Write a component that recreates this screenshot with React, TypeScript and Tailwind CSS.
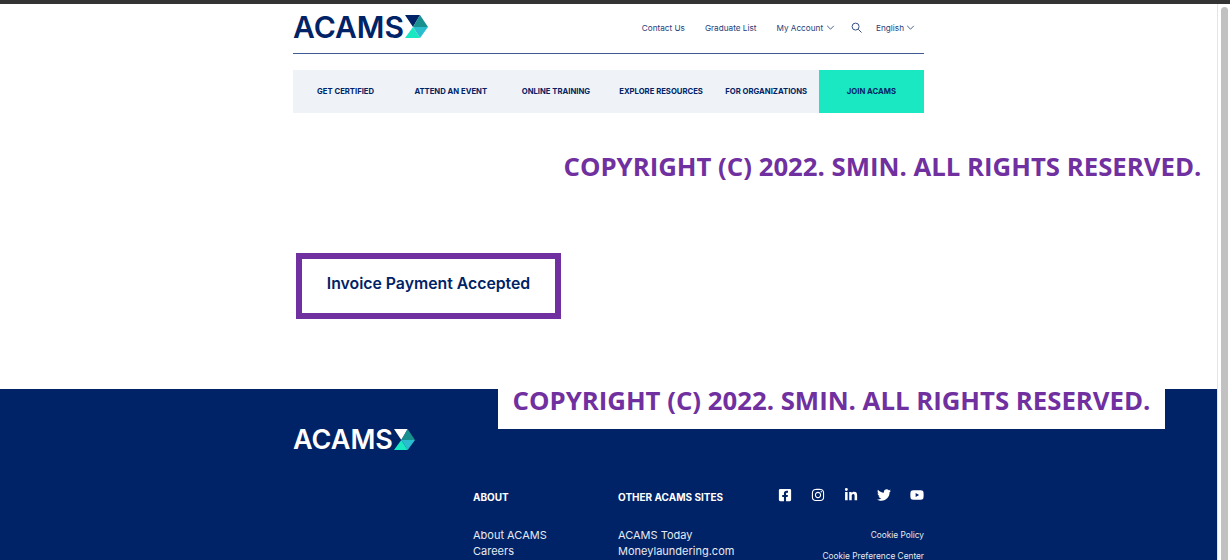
import { FaFacebookSquare, FaInstagram, FaLinkedinIn, FaTwitter, FaYoutube } from "react-icons/fa";

const navItems = ["GET CERTIFIED", "ATTEND AN EVENT", "ONLINE TRAINING", "EXPLORE RESOURCES", "FOR ORGANIZATIONS"];

function Logo({ light }: { light?: boolean }) {
  return (
    <div className="flex items-center gap-[1px]">
      <span
        className={`font-['Inter',sans-serif] font-semibold leading-none ${
          light ? "text-[27px] text-white" : "text-[30px] text-[#002266]"
        }`}
      >
        ACAMS
      </span>
      <svg viewBox="0 0 23 23" className={light ? "w-[21px] h-[21px]" : "w-[23px] h-[23px] -mt-[2px]"}>
        <polygon points="0,0 15,0 8,12" fill={light ? "#ffffff" : "#002266"} />
        <polygon points="15,0 23,12 8,12" fill="#17908f" />
        <polygon points="8,12 23,12 15,23" fill="#2abdcf" />
        <polygon points="8,12 15,23 0,23" fill="#19e8c3" />
      </svg>
    </div>
  );
}

function Watermark() {
  return (
    <span className="font-['Open_Sans',sans-serif] font-bold text-[25.75px] leading-[26px] text-[#7030a0] whitespace-nowrap">
      COPYRIGHT (C) 2022. SMIN. ALL RIGHTS RESERVED.
    </span>
  );
}

export default function App() {
  return (
    <div className="h-[560px] overflow-hidden flex flex-col bg-white font-['Inter',sans-serif]">
      <div className="h-1 bg-[#333333] shrink-0" />
      <div className="flex flex-1 min-h-0">
        <div className="relative flex-1 flex flex-col min-w-0">
          <main className="h-[385px] shrink-0">
            <div className="w-[631px] mx-auto">
              <header className="h-[50px] border-b border-[#3f5a92] flex justify-between">
                <div className="pt-[8px]">
                  <Logo />
                </div>
                <div className="flex items-center gap-5 text-[8.2px] text-[#26407a] pb-[1px]">
                  <a>Contact Us</a>
                  <a>Graduate List</a>
                  <a className="flex items-center gap-[3px]">
                    My Account
                    <svg viewBox="0 0 10 6" className="w-[9px] h-[5px]" fill="none" stroke="#26407a">
                      <path d="M1 1l4 4 4-4" />
                    </svg>
                  </a>
                  <div className="flex items-center gap-[14px] -ml-[4px]">
                    <svg viewBox="0 0 12 12" className="w-[11px] h-[11px]" fill="none" stroke="#26407a">
                      <circle cx="5" cy="5" r="3.8" />
                      <path d="M8 8l3.5 3.5" />
                    </svg>
                    <a className="flex items-center gap-[2px] pr-[9px]">
                      English
                      <svg viewBox="0 0 10 6" className="w-[9px] h-[5px]" fill="none" stroke="#26407a">
                        <path d="M1 1l4 4 4-4" />
                      </svg>
                    </a>
                  </div>
                </div>
              </header>
              <nav className="mt-[16px] h-[43px] grid grid-cols-6 bg-[#eff3f7] text-[7.7px] font-bold text-[#002266]">
                {navItems.map((item) => (
                  <a key={item} className="flex items-center justify-center whitespace-nowrap">
                    {item}
                  </a>
                ))}
                <a className="flex items-center justify-center bg-[#19e8c3]">JOIN ACAMS</a>
              </nav>
              <div className="mt-[140px] ml-[3px] w-[265px] h-[66px] border-[6px] border-[#7030a0] flex items-center justify-center pb-[4px]">
                <span className="text-[15.8px] font-semibold text-[#002266] whitespace-nowrap">Invoice Payment Accepted</span>
              </div>
            </div>
          </main>
          <footer className="flex-1 bg-[#002266] text-white">
            <div className="w-[631px] mx-auto pt-[37px]">
              <Logo light />
              <div className="flex mt-[36px] pl-[180px]">
                <div className="w-[145px]">
                  <h3 className="text-[10px] font-bold leading-4">ABOUT</h3>
                  <ul className="mt-[22px] text-[11px] leading-4 text-[#e6eaf2]">
                    <li>About ACAMS</li>
                    <li>Careers</li>
                  </ul>
                </div>
                <div className="w-[160px]">
                  <h3 className="text-[10px] font-bold leading-4">OTHER ACAMS SITES</h3>
                  <ul className="mt-[22px] text-[11px] leading-4 text-[#e6eaf2]">
                    <li>ACAMS Today</li>
                    <li>Moneylaundering.com</li>
                  </ul>
                </div>
                <div className="flex-1 flex flex-col items-end">
                  <div className="w-full flex justify-between items-center h-[13px] -mt-[1px]">
                    <FaFacebookSquare className="w-[14px] h-[14px]" />
                    <FaInstagram className="w-[14px] h-[14px]" />
                    <FaLinkedinIn className="w-[14px] h-[14px]" />
                    <FaTwitter className="w-[14px] h-[14px]" />
                    <FaYoutube className="w-[14px] h-[14px]" />
                  </div>
                  <p className="mt-[28px] text-[8.3px] leading-3 text-[#e6eaf2]">Cookie Policy</p>
                  <p className="mt-[9px] text-[8.3px] leading-3 text-[#e6eaf2] whitespace-nowrap">Cookie Preference Center</p>
                </div>
              </div>
            </div>
          </footer>
          <div className="absolute left-[563.5px] top-[149px]">
            <Watermark />
          </div>
          <div className="absolute left-[498px] top-[385px] w-[667px] h-[40px] bg-white flex items-center justify-center pb-[18px]">
            <Watermark />
          </div>
        </div>
        <div className="w-[13px] shrink-0 border-l border-[#e4e4e4] pl-[3px] pt-[3px]">
          <div className="w-[7px] h-full rounded-t-full bg-[#c1c1c1]" />
        </div>
      </div>
    </div>
  );
}
